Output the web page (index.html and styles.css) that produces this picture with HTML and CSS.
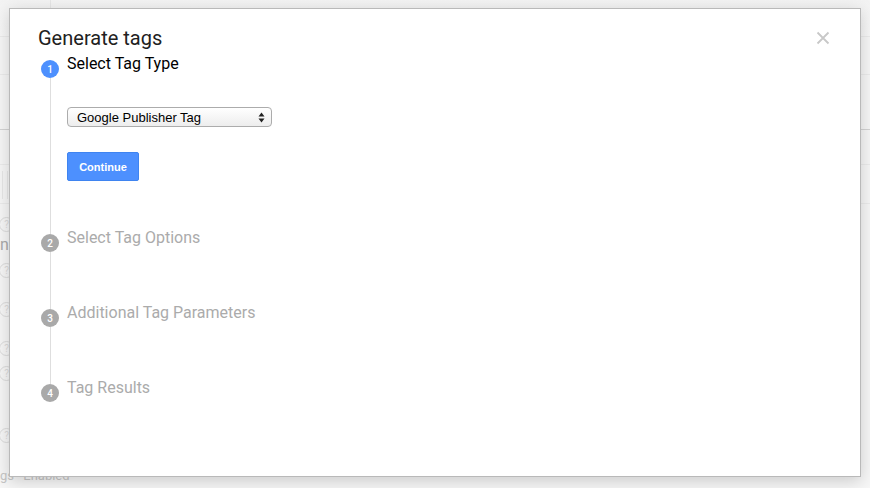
FILE: index.html
```html
<!DOCTYPE html>
<html>
	<head>
		<title>Generate tags</title>
		<link rel="stylesheet" href="styles.css">
	</head>
	<body>
	<div class="page">
		<div class="row top"><div class="nav"></div></div>
		<div class="row"></div>
		<div class="row dark"></div>
		<div class="row short"></div>
		<div class="row cols"><span></span><span></span></div>
		<div class="help h1"><i>?</i></div>
		<div class="help label"><span>ne</span></div>
		<div class="help h2"><i>?</i></div>
		<div class="help h3"><i>?</i></div>
		<div class="help h4"><i>?</i></div>
		<div class="help h5"><i>?</i></div>
		<div class="help h6"><i>?</i></div>
		<div class="foot"><span>gs</span> <span>Enabled</span></div>
	</div>

	<div class="dialog">
		<div class="head">
			<h1>Generate tags</h1>
			<svg class="close" width="14" height="14" viewBox="0 0 14 14">
				<path d="M1.5 1.5 L12.5 12.5 M12.5 1.5 L1.5 12.5" stroke="#c8c8c8" stroke-width="1.8" fill="none"/>
			</svg>
		</div>
		<div class="steps">
			<div class="step first">
				<div class="rail"><div class="num active">1</div><div class="line"></div></div>
				<div class="body">
					<div class="label active">Select Tag Type</div>
					<div class="select">
						<span>Google Publisher Tag</span>
						<svg width="7" height="11" viewBox="0 0 7 11">
							<path d="M3.5 0.5 L6.5 4.5 L0.5 4.5 Z M0.5 6.5 L6.5 6.5 L3.5 10.5 Z" fill="#222"/>
						</svg>
					</div>
					<div class="button">Continue</div>
				</div>
			</div>
			<div class="step">
				<div class="rail"><div class="num">2</div><div class="line"></div></div>
				<div class="body"><div class="label">Select Tag Options</div></div>
			</div>
			<div class="step">
				<div class="rail"><div class="num">3</div><div class="line"></div></div>
				<div class="body"><div class="label">Additional Tag Parameters</div></div>
			</div>
			<div class="step last">
				<div class="rail"><div class="num">4</div></div>
				<div class="body"><div class="label">Tag Results</div></div>
			</div>
		</div>
	</div>
	</body>
</html>
```

FILE: styles.css
```css
html, body {
	margin: 0;
	padding: 0;
}
body {
	width: 870px;
	height: 488px;
	overflow: hidden;
	background: #f7f7f7;
	font-family: Roboto, "Liberation Sans", sans-serif;
}

/* faded page under the dialog */
.page {
	height: 488px;
	color: #cdcdcd;
	font-size: 13px;
}
.row {
	height: 37px;
	border-bottom: 1px solid #ececec;
}
.row.top {
	height: 36px;
	background: linear-gradient(#f3f3f3, #f8f8f8);
}
.nav {
	width: 50px;
	height: 8px;
	border-right: 1px solid #e6e6e6;
}
.row.dark {
	height: 54px;
	border-bottom-color: #d4d4d4;
}
.row.short {
	height: 34px;
}
.row.cols {
	height: 39px;
	display: flex;
	gap: 4px;
	padding-left: 2px;
	padding-top: 6px;
	box-sizing: border-box;
}
.row.cols span {
	width: 1px;
	height: 28px;
	background: #e8e8e8;
}
.help {
	height: 26px;
	display: flex;
	align-items: center;
}
.help i {
	display: flex;
	align-items: center;
	justify-content: center;
	width: 13px;
	height: 13px;
	margin-left: -1px;
	border: 1px solid #dcdcdc;
	border-radius: 50%;
	color: #dcdcdc;
	font-size: 10px;
	font-style: normal;
}
.help.label {
	padding-top: 2px;
	box-sizing: border-box;
}
.help.h1 { margin-top: 7px; }
.help.h3 { margin-top: 13px; }
.help.h4 { margin-top: 13px; }
.help.h5 { height: 24px; }
.help.h6 { margin-top: 37px; }
.foot {
	margin-top: 20px;
	color: #c6c6c6;
	font-size: 13px;
	line-height: 15px;
}
.foot span + span {
	margin-left: 6px;
}

/* dialog */
.dialog {
	position: absolute;
	left: 9px;
	top: 8px;
	width: 852px;
	height: 469px;
	box-sizing: border-box;
	background: #fff;
	border: 1px solid #b9b9b9;
	box-shadow: 0 4px 16px rgba(0, 0, 0, 0.18);
	padding: 17px 30px 0 28px;
}
.head {
	display: flex;
	justify-content: space-between;
	align-items: flex-start;
	height: 24px;
}
h1 {
	margin: 0;
	font-size: 20px;
	font-weight: normal;
	line-height: 24px;
	color: #212121;
}
.close {
	margin-top: 5px;
}
.steps {
	margin-top: 10px;
	margin-left: 3px;
}
.step {
	display: flex;
	gap: 8px;
	min-height: 75px;
}
.step.last {
	min-height: 0;
}
.rail {
	width: 18px;
	display: flex;
	flex-direction: column;
	align-items: center;
}
.num {
	width: 18px;
	height: 18px;
	border-radius: 50%;
	background: #a9a9a9;
	color: #fff;
	font-size: 10px;
	font-weight: 500;
	line-height: 19px;
	text-align: center;
}
.num.active {
	background: #4d90fe;
}
.line {
	flex: 1;
	width: 1px;
	background: #dedede;
}
.body {
	display: flex;
	flex-direction: column;
	align-items: flex-start;
}
.step.first .body {
	padding-bottom: 53px;
}
.label {
	margin-top: -6px;
	font-size: 16px;
	line-height: 20px;
	color: #ababab;
}
.label.active {
	color: #000;
}
.select {
	margin-top: 33px;
	width: 205px;
	height: 20px;
	box-sizing: border-box;
	display: flex;
	align-items: center;
	justify-content: space-between;
	padding: 0 6px 0 9px;
	border: 1px solid #acacac;
	border-radius: 4px;
	background: linear-gradient(#ffffff, #ededed);
	font-family: "Liberation Sans", Arial, sans-serif;
	font-size: 13px;
	color: #000;
}
.button {
	margin-top: 25px;
	width: 72px;
	height: 29px;
	box-sizing: border-box;
	display: flex;
	align-items: center;
	justify-content: center;
	background: #4d90fe;
	border: 1px solid #3f84f0;
	border-radius: 2px;
	color: #fff;
	font-family: "Liberation Sans", Arial, sans-serif;
	font-size: 11px;
	font-weight: bold;
}
```
